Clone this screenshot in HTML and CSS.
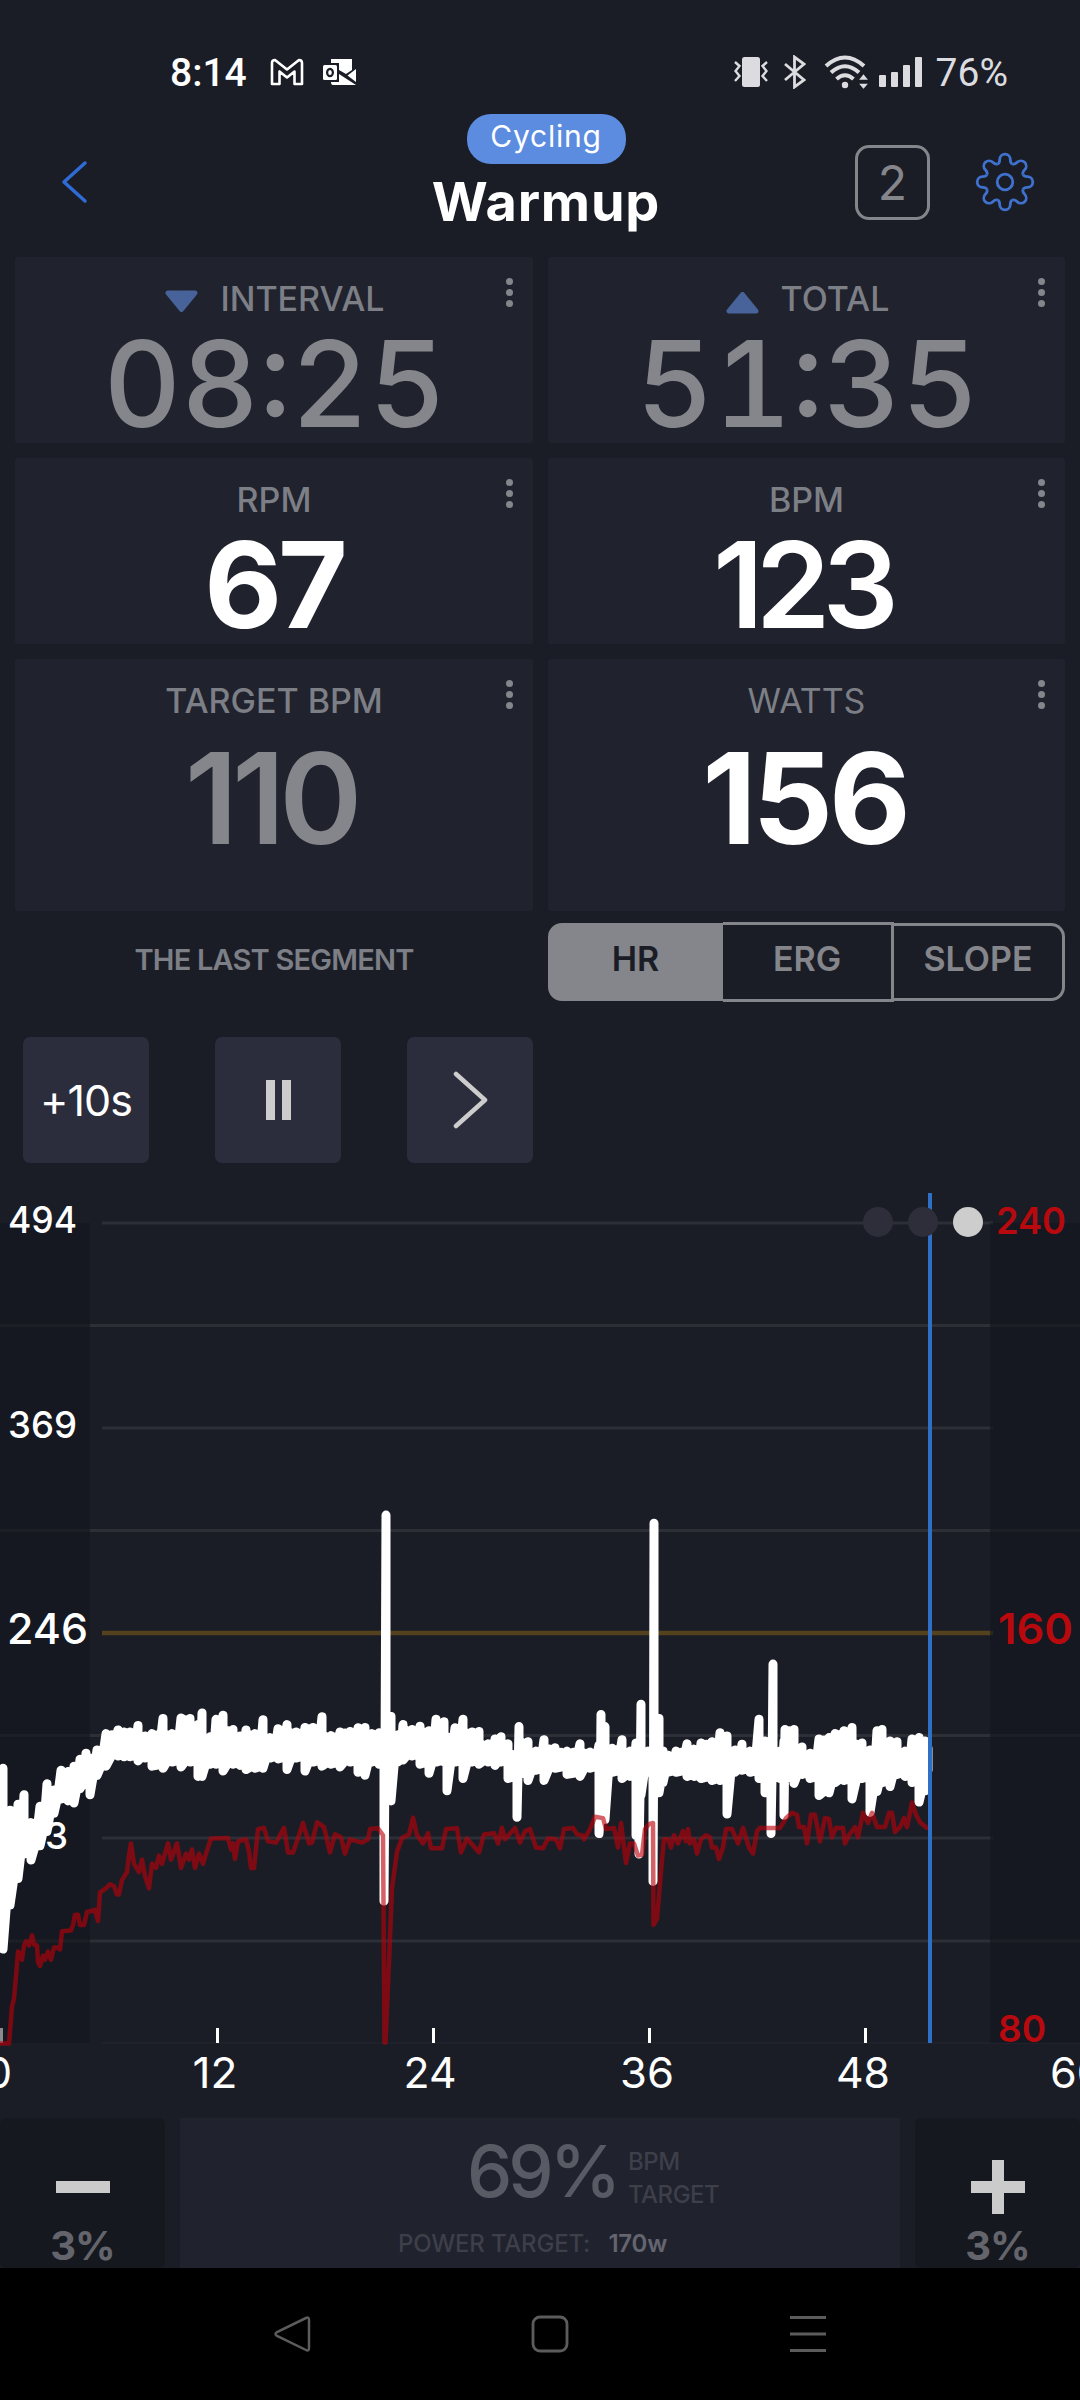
FILE: index.html
```html
<!DOCTYPE html>
<html lang="en">
<head>
    <meta charset="UTF-8">
    <title>Warmup</title>
    <link rel="stylesheet" href="styles.css">
</head>
<body>
    <div class="status-bar">
        <div class="status-left">
            <span class="clock">8:14</span>
            <svg class="gmail" width="34" height="28" viewBox="0 0 34 28">
                <path d="M2 5 Q2 2 5 2 L17 11.500 L29 2 Q32 2 32 5 V26 H24.500 V13.500 L17 19.500 L9.500 13.500 V26 H2 Z" fill="none" stroke="#fff" stroke-width="2.600" stroke-linejoin="round"/>
            </svg>
            <svg class="outlook" width="34" height="28" viewBox="0 0 34 28">
                <path d="M9 1 H30 V12 L24 16 L17 12 V5 H9 Z M34 11 V24 L25.500 17.500 Z M9 24 H17 V16 L34 27 H11 Q9 27 9 24 Z" fill="#fff"/>
                <rect x="1" y="7" width="14" height="15" rx="1.500" fill="#fff"/>
                <ellipse cx="8" cy="14.500" rx="2.900" ry="3.700" fill="none" stroke="#1b1d26" stroke-width="2.200"/>
            </svg>
        </div>
        <div class="status-right">
            <svg width="34" height="34" viewBox="0 0 34 34">
                <rect x="8" y="2" width="18" height="30" rx="2.500" fill="#dcdce0"/>
                <path d="M1 7 L5.500 11 L1.500 16 L5.500 21 L1 26 M33 7 L28.500 11 L32.500 16 L28.500 21 L33 26" fill="none" stroke="#dcdce0" stroke-width="2.400"/>
            </svg>
            <svg class="bt" width="22" height="34" viewBox="0 0 22 34">
                <path d="M1 9 L20 25 L10.500 32 V2 L20 9 L1 25" fill="none" stroke="#dcdce0" stroke-width="2.800"/>
            </svg>
            <svg class="wifi" width="46" height="36" viewBox="0 0 46 36">
                <path d="M2 12 Q21 -5 40 12 M7 18.500 Q21 6 35 18.500 M12.500 25 Q21 17.500 29.500 25" fill="none" stroke="#dcdce0" stroke-width="4"/>
                <circle cx="21" cy="31" r="3.200" fill="#dcdce0"/>
                <path d="M33.500 26.500 H45.500 L39.500 19 Z M33.500 29 H45.500 L39.500 36 Z" fill="#dcdce0" stroke="#1b1d26" stroke-width="1.500"/>
            </svg>
            <svg class="signal" width="44" height="32" viewBox="0 0 44 32" fill="#dcdce0">
                <rect x="0" y="19" width="7" height="12" rx="1"/>
                <rect x="12" y="16" width="7" height="15" rx="1"/>
                <rect x="24" y="9" width="7" height="22" rx="1"/>
                <rect x="36" y="1" width="7" height="30" rx="1"/>
            </svg>
            <span class="battery">76%</span>
        </div>
    </div>

    <div class="header">
        <svg class="back" width="30" height="46" viewBox="0 0 30 46">
            <path d="M25 4 L4 23 L25 42" fill="none" stroke="#2f6bd6" stroke-width="3.500" stroke-linecap="round" stroke-linejoin="round"/>
        </svg>
        <div class="heading">
            <span class="pill">Cycling</span>
            <span class="title">Warmup</span>
        </div>
        <div class="actions">
            <div class="count-box">2</div>
            <svg class="gear" width="60" height="60" viewBox="-30 -30 60 60" fill="none" stroke="#3f72cf" stroke-width="2.800">
                <defs>
                    <path id="tooth" d="M-7.500 -18 C-5.800 -18.700 -5.300 -20 -5.300 -22.500 A5.300 5.300 0 0 1 5.300 -22.500 C5.300 -20 5.800 -18.700 7.500 -18"/>
                </defs>
                <use href="#tooth"/>
                <use href="#tooth" transform="rotate(45)"/>
                <use href="#tooth" transform="rotate(90)"/>
                <use href="#tooth" transform="rotate(135)"/>
                <use href="#tooth" transform="rotate(180)"/>
                <use href="#tooth" transform="rotate(225)"/>
                <use href="#tooth" transform="rotate(270)"/>
                <use href="#tooth" transform="rotate(315)"/>
                <circle r="7.800"/>
            </svg>
        </div>
    </div>

    <div class="cards">
        <div class="card">
            <div class="label interval">
                <svg width="33" height="22" viewBox="0 0 33 22"><path d="M3 3 H30 L16.500 19.500 Z" fill="#48629a" stroke="#48629a" stroke-width="5" stroke-linejoin="round"/></svg>
                INTERVAL
            </div>
            <div class="value time">08:25</div>
            <div class="dots"><i></i><i></i><i></i></div>
        </div>
        <div class="card">
            <div class="label total">
                <svg width="33" height="22" viewBox="0 0 33 22"><path d="M3 19 H30 L16.500 2.500 Z" fill="#48629a" stroke="#48629a" stroke-width="5" stroke-linejoin="round"/></svg>
                TOTAL
            </div>
            <div class="value time">51:35</div>
            <div class="dots"><i></i><i></i><i></i></div>
        </div>
        <div class="card">
            <div class="label">RPM</div>
            <div class="value rpm">67</div>
            <div class="dots"><i></i><i></i><i></i></div>
        </div>
        <div class="card">
            <div class="label">BPM</div>
            <div class="value bpm">123</div>
            <div class="dots"><i></i><i></i><i></i></div>
        </div>
        <div class="card tall">
            <div class="label">TARGET BPM</div>
            <div class="value dim">110</div>
            <div class="dots"><i></i><i></i><i></i></div>
        </div>
        <div class="card tall">
            <div class="label thin">WATTS</div>
            <div class="value watts">156</div>
            <div class="dots"><i></i><i></i><i></i></div>
        </div>
    </div>

    <div class="mode-row">
        <div class="segment-name">THE LAST SEGMENT</div>
        <div class="modes">
            <div class="mode active">HR</div>
            <div class="mode middle">ERG</div>
            <div class="mode">SLOPE</div>
        </div>
    </div>

    <div class="controls">
        <div class="btn">+10s</div>
        <div class="btn">
            <svg width="25" height="40" viewBox="0 0 25 40" fill="#cdcdcd"><rect width="9" height="40"/><rect x="16" width="9" height="40"/></svg>
        </div>
        <div class="btn">
            <svg width="36" height="60" viewBox="0 0 36 60"><path d="M4 4 L33 30 L4 56" fill="none" stroke="#cdcdcd" stroke-width="4.500" stroke-linecap="round" stroke-linejoin="round"/></svg>
        </div>
    </div>

    <svg class="chart" width="1080" height="928" viewBox="0 0 1080 928">
        <!-- grid -->
        <g stroke="#2d2f37" stroke-width="3">
            <path d="M102 33 H993 M102 238 H993 M102 648 H993"/>
            <path d="M0 135.500 H1080 M0 340.500 H1080 M0 545.500 H1080 M0 751 H1080"/>
            <path d="M102 853 H1080" stroke="#20222b" stroke-width="2"/>
        </g>
        <path d="M102 443 H993" stroke="#54421f" stroke-width="4.500"/>
        <g fill="#13151c" opacity="0.600">
            <rect x="0" y="33" width="90" height="820"/>
            <rect x="990" y="33" width="90" height="820"/>
        </g>

        <!-- axis labels -->
        <g class="watt-axis">
            <text x="8" y="43" font-size="37" textLength="69" lengthAdjust="spacingAndGlyphs">494</text>
            <text x="8" y="248" font-size="37" textLength="69" lengthAdjust="spacingAndGlyphs">369</text>
            <text x="7" y="454" font-size="43" textLength="81" lengthAdjust="spacingAndGlyphs">246</text>
            <text x="7" y="659" font-size="37" textLength="61" lengthAdjust="spacingAndGlyphs">123</text>
        </g>
        <g class="bpm-axis">
            <text x="996" y="44" font-size="37" textLength="70" lengthAdjust="spacingAndGlyphs">240</text>
            <text x="998" y="454" font-size="43" textLength="75" lengthAdjust="spacingAndGlyphs">160</text>
            <text x="998" y="852" font-size="37" textLength="48" lengthAdjust="spacingAndGlyphs">80</text>
        </g>
        <path d="M217.500 838 V853 M433.500 838 V853 M649.500 838 V853 M865.500 838 V853" stroke="#fff" stroke-width="3"/>
        <path d="M1.500 838 V853" stroke="#8a8b90" stroke-width="3"/>
        <g class="time-axis">
            <text x="-1" y="898" textLength="26" lengthAdjust="spacingAndGlyphs">0</text>
            <text x="215" y="898" textLength="45" lengthAdjust="spacingAndGlyphs">12</text>
            <text x="430" y="898" textLength="53" lengthAdjust="spacingAndGlyphs">24</text>
            <text x="647" y="898" textLength="54" lengthAdjust="spacingAndGlyphs">36</text>
            <text x="863" y="898" textLength="54" lengthAdjust="spacingAndGlyphs">48</text>
            <text x="1077" y="898" textLength="54" lengthAdjust="spacingAndGlyphs">60</text>
        </g>

        <polyline id="power" fill="none" stroke="#fff" stroke-width="9" stroke-linejoin="round" stroke-linecap="round"/>
        <polyline id="heart" fill="none" stroke="#bb0008" stroke-opacity="0.620" stroke-width="4.500" stroke-linejoin="round" stroke-linecap="round"/>

        <path d="M930 3 V853" stroke="#2f6fc6" stroke-width="4"/>
        <circle cx="878" cy="32" r="15" fill="#2d2e39"/>
        <circle cx="923" cy="32" r="15" fill="#2d2e39"/>
        <circle cx="968" cy="32" r="15" fill="#cdcdcd"/>
    </svg>

    <div class="target-bar">
        <div class="step">
            <svg width="54" height="54" viewBox="0 0 54 54"><path d="M0 27 H54" stroke="#cbcbcb" stroke-width="12"/></svg>
            <span>3%</span>
        </div>
        <div class="target">
            <div class="target-main">
                <span class="percent">69%</span>
                <span class="target-unit">BPM<br>TARGET</span>
            </div>
            <div class="power">POWER TARGET: <b>170w</b></div>
        </div>
        <div class="step">
            <svg width="54" height="54" viewBox="0 0 54 54"><path d="M0 27 H54 M27 0 V54" stroke="#cbcbcb" stroke-width="12"/></svg>
            <span>3%</span>
        </div>
    </div>

    <div class="nav-bar">
        <svg width="38" height="40" viewBox="0 0 38 40"><path d="M33 4 Q36 2.500 36 6 V34 Q36 37.500 33 36 L4 22 Q1 20 4 18 Z" fill="none" stroke="#5c5c5c" stroke-width="2.500"/></svg>
        <svg width="38" height="40" viewBox="0 0 38 40"><rect x="2" y="3" width="34" height="34" rx="7" fill="none" stroke="#5c5c5c" stroke-width="2.800"/></svg>
        <svg width="38" height="40" viewBox="0 0 38 40"><path d="M1 3.500 H37 M1 20 H37 M1 36.500 H37" stroke="#5c5c5c" stroke-width="2.800"/></svg>
    </div>

    <script src="script.js"></script>
</body>
</html>
```

FILE: styles.css
```css
body {
    margin: 0;
    width: 1080px;
    height: 2400px;
    overflow: hidden;
    background-color: #1b1d26;
    color: white;
    font-family: Inter, "Noto Sans", sans-serif;
}

svg {
    display: block;
}

/* status bar */
.status-bar {
    display: flex;
    justify-content: space-between;
    height: 114px;
    box-sizing: border-box;
    padding: 49px 72px 0 170px;
    font-family: Roboto, sans-serif;
    font-size: 39px;
    line-height: 46px;
}

.status-left,
.status-right {
    display: flex;
    height: 46px;
    align-items: center;
}

.clock {
    font-weight: 500;
    width: 100px;
    padding-top: 2px;
}

.outlook {
    margin-left: 18px;
}

.status-right {
    color: #dcdce0;
}

.bt {
    margin-left: 16px;
}

.wifi {
    margin-left: 18px;
}

.signal {
    margin-left: 9px;
}

.battery {
    margin-left: 13px;
    padding-top: 2px;
}

/* header */
.header {
    display: grid;
    grid-template-columns: 300px 1fr 300px;
    height: 143px;
}

.back {
    margin: 45px 0 0 60px;
}

.heading {
    display: flex;
    flex-direction: column;
    align-items: center;
    padding-left: 12px;
}

.pill {
    height: 50px;
    width: 159px;
    border-radius: 24px;
    background-color: #5c8ce0;
    font-size: 30px;
    line-height: 44px;
    text-align: center;
    letter-spacing: 0.8px;
}

.title {
    margin-top: 8px;
    font-size: 54px;
    font-weight: 700;
    line-height: 60px;
    letter-spacing: 0.8px;
}

.actions {
    display: flex;
    gap: 45px;
    padding: 31px 0 0 75px;
}

.count-box {
    box-sizing: border-box;
    width: 75px;
    height: 75px;
    border: 3px solid #85868b;
    border-radius: 14px;
    color: #85868b;
    font-size: 48px;
    font-weight: 400;
    line-height: 70px;
    text-align: center;
}

.gear {
    margin-top: 7px;
}

/* metric cards */
.cards {
    display: grid;
    grid-template-columns: 518px 517px;
    grid-template-rows: 186px 186px 252px;
    gap: 15px;
    padding: 0 15px;
}

.card {
    position: relative;
    box-sizing: border-box;
    padding-top: 22px;
    border-radius: 3px;
    background-color: #20222e;
    text-align: center;
}

.label {
    display: flex;
    justify-content: center;
    align-items: center;
    gap: 22px;
    height: 40px;
    color: #7d7f86;
    font-size: 34px;
    font-weight: 500;
    line-height: 40px;
}

.label svg {
    margin-top: 3px;
}

.interval,
.total {
    padding-left: 2px;
}

.total svg {
    margin-top: 8px;
}

.thin {
    font-weight: 400;
}

.value {
    margin-top: 15px;
    font-size: 120px;
    font-weight: 700;
    line-height: 100px;
}

.time {
    color: #85868b;
    font-weight: 500;
    font-variant-numeric: tabular-nums;
    padding-left: 2px;
}

.rpm {
    letter-spacing: -4px;
}

.bpm {
    font-weight: 600;
    letter-spacing: -8px;
    padding-right: 9px;
}

.tall .value {
    margin-top: 27px;
    font-size: 126px;
}

.watts {
    letter-spacing: -4px;
    padding-right: 4px;
}

.dim {
    color: #85868b;
    font-weight: 600;
    letter-spacing: -6px;
    padding-right: 7px;
}

.dots {
    position: absolute;
    top: 21px;
    right: 20px;
    display: flex;
    flex-direction: column;
    gap: 4px;
}

.dots i {
    width: 7px;
    height: 7px;
    border-radius: 50%;
    background-color: #85868b;
}

/* segment name and mode switch */
.mode-row {
    display: grid;
    grid-template-columns: 518px 517px;
    gap: 15px;
    padding: 0 15px;
    margin-top: 11px;
    height: 80px;
    align-items: center;
}

.segment-name {
    color: #7d7f86;
    font-size: 29px;
    font-weight: 600;
    line-height: 40px;
    letter-spacing: -0.8px;
    padding-bottom: 4px;
    text-align: center;
}

.modes {
    display: grid;
    grid-template-columns: 175px 171px 171px;
    align-items: center;
}

.mode {
    box-sizing: border-box;
    height: 78px;
    border: 3px solid #85868b;
    border-left: none;
    border-radius: 0 14px 14px 0;
    color: #85868b;
    font-size: 34px;
    font-weight: 600;
    line-height: 66px;
    text-align: center;
}

.active {
    border-left: 3px solid #85868b;
    border-radius: 14px 0 0 14px;
    background-color: #85868b;
    color: #1b1d26;
}

.middle {
    height: 80px;
    border-radius: 0;
    line-height: 68px;
}

/* buttons */
.controls {
    display: flex;
    gap: 66px;
    margin-top: 35px;
    padding-left: 23px;
}

.btn {
    display: flex;
    justify-content: center;
    align-items: center;
    width: 126px;
    height: 126px;
    border-radius: 7px;
    background-color: #2b2d3d;
    font-size: 43px;
    line-height: 50px;
    letter-spacing: -1px;
}

/* chart */
.chart {
    margin-top: 27px;
}

.watt-axis {
    fill: white;
    font-weight: 500;
}

.bpm-axis {
    fill: #b80a0e;
    font-weight: 600;
}

.time-axis {
    fill: white;
    font-size: 43px;
    text-anchor: middle;
}

/* target bar */
.target-bar {
    display: grid;
    grid-template-columns: 165px 720px 165px;
    grid-template-rows: 150px;
    gap: 15px;
    height: 150px;
}

.step {
    display: flex;
    flex-direction: column;
    align-items: center;
    gap: 10px;
    padding-top: 42px;
    border-radius: 6px;
    background-color: #16181f;
    color: #64656c;
    font-size: 40px;
    font-weight: 700;
    line-height: 44px;
    letter-spacing: -1px;
}

.target {
    background-color: #20222e;
    color: #3d3f49;
    font-weight: 500;
}

.target-main {
    display: flex;
    gap: 15px;
    padding: 15px 0 0 287px;
}

.percent {
    color: #585a64;
    font-size: 72px;
    line-height: 76px;
    letter-spacing: -4px;
    width: 146px;
}

.target-unit {
    padding-top: 12px;
    font-size: 24px;
    line-height: 33px;
    letter-spacing: -0.5px;
}

.power {
    padding: 23px 0 0 218px;
    font-size: 24px;
    line-height: 20px;
    letter-spacing: -0.2px;
}

.power b {
    margin-left: 12px;
    color: #64656f;
    font-weight: 600;
}

/* android navigation */
.nav-bar {
    display: flex;
    justify-content: center;
    align-items: center;
    gap: 220px;
    height: 132px;
    background-color: black;
    padding-left: 20px;
}
```

FILE: script.js
```js
// scale a sample to the y position in the chart
function toY(v) {
    return (290 + v * 0.4083).toFixed(1);
}

// power samples: x, highest, lowest
const power = [
    [3, 697, 1158], [10, 800, 1050], [18, 785, 985], [24, 762, 925], [31, 830, 940], [40, 790, 905],
    [47, 735, 870], [54, 750, 825], [61, 702, 790], [68, 705, 795], [74, 692, 800], [80, 675, 765],
    [86, 660, 755], [90, 672, 780], [97, 652, 733], [106, 612, 710], [118, 603, 685], [124, 608, 687],
    [130, 608, 687], [138, 592, 697], [145, 618, 690], [152, 612, 710], [163, 575, 715], [172, 612, 700],
    [181, 574, 712], [190, 575, 700], [198, 590, 735], [202, 562, 735], [210, 620, 705], [216, 577, 705],
    [223, 567, 722], [233, 602, 705], [240, 618, 708], [246, 603, 718], [255, 612, 715], [263, 578, 715],
    [270, 622, 690], [278, 600, 692], [287, 590, 718], [296, 608, 690], [305, 597, 722], [313, 597, 700],
    [322, 571, 710], [331, 617, 705], [340, 608, 712], [350, 607, 700], [358, 598, 725], [365, 597, 732],
    [372, 612, 700], [379, 610, 705], [384, 650, 1040], [386, 77, 700], [391, 570, 795], [398, 615, 700],
    [403, 590, 695], [412, 602, 685], [420, 594, 705], [429, 605, 727], [436, 577, 700], [444, 583, 700],
    [447, 620, 770], [455, 598, 700], [463, 577, 740], [472, 608, 700], [479, 607, 705], [488, 637, 700],
    [495, 625, 708], [501, 620, 700], [508, 637, 740], [517, 660, 835], [519, 595, 730], [528, 632, 745],
    [536, 655, 720], [544, 627, 745], [555, 647, 715], [567, 655, 730], [580, 637, 735], [590, 657, 715],
    [599, 640, 875], [601, 565, 840], [605, 595, 840], [612, 648, 725], [622, 627, 740], [630, 655, 735],
    [636, 635, 880], [639, 660, 925], [641, 540, 780], [648, 655, 725], [653, 670, 992], [654, 97, 770],
    [659, 575, 775], [663, 655, 750], [668, 665, 725], [676, 655, 725], [687, 637, 735], [694, 650, 735],
    [701, 635, 740], [712, 632, 745], [720, 610, 745], [727, 618, 827], [735, 652, 725], [742, 638, 720],
    [750, 655, 725], [759, 577, 740], [765, 630, 775], [771, 632, 875], [773, 442, 740], [780, 655, 740],
    [784, 630, 830], [785, 602, 740], [794, 602, 752], [802, 645, 730], [810, 660, 740], [819, 625, 782],
    [829, 622, 775], [835, 612, 750], [844, 605, 745], [852, 597, 790], [862, 635, 740], [870, 652, 823],
    [877, 605, 772], [882, 602, 750], [890, 630, 760], [897, 632, 730], [905, 655, 735], [912, 625, 750],
    [919, 622, 798], [925, 630, 770], [928, 648, 720]
];

// heart rate samples: x, value
const heart = [
    [0, 1380], [9, 1380], [10, 1350], [12, 1290], [14, 1270], [16, 1215], [18, 1155], [20, 1160], [22, 1175],
    [24, 1140], [26, 1130], [29, 1140], [32, 1115], [34, 1138], [37, 1140], [38, 1180], [40, 1190], [43, 1165],
    [45, 1175], [48, 1155], [51, 1175], [54, 1145], [57, 1145], [60, 1150], [62, 1105], [71, 1103], [73, 1090],
    [75, 1065], [78, 1065], [80, 1090], [84, 1090], [87, 1058], [95, 1053], [98, 1080], [100, 1010], [106, 1000],
    [110, 990], [114, 995], [117, 1015], [119, 1015], [122, 980], [127, 960], [129, 920], [131, 890], [134, 940],
    [139, 960], [142, 930], [145, 970], [149, 1000], [152, 940], [156, 950], [159, 920], [162, 940], [168, 890],
    [171, 930], [177, 890], [181, 950], [186, 915], [189, 930], [192, 905], [195, 950], [199, 915], [203, 940],
    [206, 915], [211, 878], [228, 877], [231, 905], [233, 890], [235, 928], [238, 885], [246, 880], [249, 910],
    [251, 950], [254, 950], [258, 855], [264, 852], [268, 885], [276, 888], [284, 852], [288, 912], [293, 912],
    [299, 870], [303, 840], [309, 890], [312, 888], [317, 838], [324, 850], [330, 912], [335, 868], [341, 875],
    [345, 915], [350, 880], [362, 888], [368, 880], [370, 855], [378, 853], [383, 870], [384.5, 1378], [385.5, 1378],
    [389, 1180], [392, 1000], [397, 910], [402, 877], [409, 868], [413, 827], [417, 870], [423, 890], [428, 865],
    [431, 902], [442, 902], [446, 855], [457, 853], [461, 912], [467, 878], [479, 912], [484, 868], [494, 865],
    [498, 890], [502, 852], [505, 880], [515, 852], [520, 888], [525, 860], [530, 855], [536, 900], [543, 902],
    [548, 878], [556, 880], [560, 902], [564, 855], [573, 852], [577, 868], [582, 870], [584, 880], [590, 855],
    [595, 825], [603, 828], [606, 855], [614, 852], [618, 900], [621, 840], [626, 938], [630, 890], [634, 890],
    [638, 920], [642, 918], [645, 855], [649, 843], [653, 840], [653.5, 1090], [657, 1075], [662, 930], [664, 880],
    [668, 880], [671, 900], [674, 870], [678, 890], [683, 860], [686, 885], [688, 855], [690, 890], [694, 880],
    [697, 915], [701, 880], [706, 870], [710, 875], [712, 900], [716, 900], [719, 928], [723, 900], [726, 855],
    [732, 855], [738, 890], [743, 852], [749, 900], [753, 915], [757, 860], [760, 852], [780, 852], [786, 828],
    [792, 815], [797, 820], [799, 850], [804, 850], [807, 890], [811, 820], [815, 820], [820, 885], [825, 828],
    [829, 830], [832, 875], [836, 852], [843, 852], [845, 890], [849, 870], [855, 850], [858, 875], [863, 815],
    [868, 840], [872, 815], [877, 850], [885, 850], [889, 815], [892, 815], [895, 862], [900, 850], [904, 828],
    [907, 850], [912, 790], [916, 820], [920, 838], [927, 852]
];

let powerPoints = "";
power.forEach(function (p, i) {
    // the 9 keeps the round line caps inside the range
    powerPoints += `${p[0]},${toY(p[1] + 9)} ${p[0]},${toY(p[2] - 9)} `;

    // a shorter stroke between two samples
    const next = power[i + 1];
    if (next) {
        const x = (p[0] + next[0]) / 2;
        const high = Math.max(p[1], next[1]) + 12;
        const low = Math.min(p[2], next[2]) - 12;
        powerPoints += `${x},${toY(low)} ${x},${toY(high)} ${x},${toY(low)} `;
    }
});
document.getElementById("power").setAttribute("points", powerPoints);

document.getElementById("heart").setAttribute("points", heart.map(p => `${p[0]},${toY(p[1])}`).join(" "));
```
